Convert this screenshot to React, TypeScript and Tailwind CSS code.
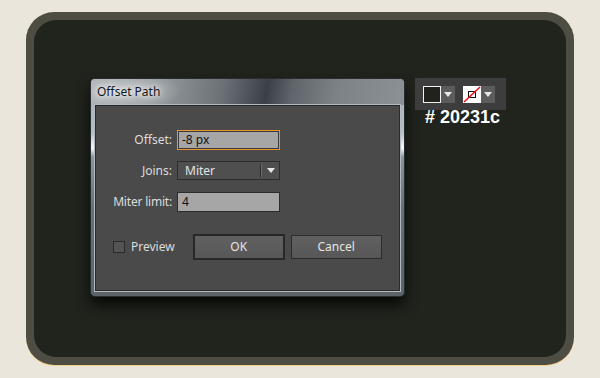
import React from "react";

const font = { fontFamily: '"Noto Sans", "Open Sans", sans-serif' };

function Arrow({ className = "" }: { className?: string }) {
  return (
    <svg width="8" height="5" viewBox="0 0 8 5" className={className}>
      <path d="M0 0 H8 L4 5 Z" fill="#e8e8e8" />
    </svg>
  );
}

export default function App() {
  return (
    <div className="w-[600px] h-[378px] bg-[#ebe6dc] pt-[12px] pl-[26px] overflow-hidden" style={font}>
      <div className="w-[548px] h-[353px] rounded-[28px] bg-[#4e4d44] p-[8px] shadow-[0_1px_0_#f4cf86]">
        <div className="w-full h-full rounded-[22px] bg-[#21241d] pt-[58px] pl-[56px] flex items-start">
          {/* Dialog */}
          <div className="w-[315px] h-[219px] rounded-[5px] border border-[#2a2d30] shadow-[0_8px_14px_rgba(0,0,0,0.75)] flex flex-col overflow-hidden bg-[linear-gradient(180deg,#a4aaad_0%,#b9bec1_25%,#e9ebec_30%,#f4f4f4_32%,#8d9397_36%,#6a7075_60%,#5c6369_100%)]">
            <div className="h-[26px] shrink-0 flex items-center pl-[6px] bg-[radial-gradient(ellipse_60px_20px_at_30px_12px,#c4c8ca,transparent),linear-gradient(100deg,#a9aeb1_0%,#939a9d_22%,#6b7176_42%,#3b4046_56%,#5f656a_64%,#7c8286_78%,#8b9194_100%)]">
              <span className="text-[12px] text-[#15171a] [text-shadow:0_0_5px_#ffffff,0_0_8px_#ffffff]">Offset Path</span>
            </div>
            <div className="mx-[4px] h-[186px] bg-[#4a4a4a] border border-[#2b2b2b] ring-1 ring-[#b3babf] flex flex-col pt-[24px]">
              <div className="flex items-center h-[20px]">
                <span className="w-[76px] text-right text-[12px] text-[#dcdcdc]">Offset:</span>
                <div className="ml-[5px] w-[103px] h-[20px] bg-[#ee9530] p-[1px]">
                  <div className="w-full h-full bg-[#a6a6a6] border border-[#3a3a3a] flex items-center pl-[3px] text-[12px] text-[#111]">-8 px</div>
                </div>
              </div>
              <div className="flex items-center h-[19px] mt-[11px]">
                <span className="w-[76px] text-right text-[12px] text-[#dcdcdc]">Joins:</span>
                <div className="ml-[5px] w-[103px] h-[19px] bg-[#4f4f4f] border border-[#2c2c2c] flex items-center text-[12px] text-[#e2e2e2]">
                  <span className="flex-1 pl-[7px]">Miter</span>
                  <div className="w-[1px] h-[13px] bg-[#2e2e2e]" />
                  <div className="w-[1px] h-[13px] bg-[#6c6c6c]" />
                  <div className="w-[17px] flex items-center justify-center">
                    <Arrow />
                  </div>
                </div>
              </div>
              <div className="flex items-center h-[20px] mt-[12px]">
                <span className="w-[76px] text-right text-[12px] text-[#dcdcdc] tracking-[-0.2px]">Miter limit:</span>
                <div className="ml-[5px] w-[103px] h-[20px] bg-[#a6a6a6] border border-[#2c2c2c] flex items-center pl-[4px] text-[12px] text-[#111]">4</div>
              </div>
              <div className="flex items-center mt-[22px] h-[26px]">
                <div className="ml-[17px] w-[12px] h-[12px] border border-[#2a2a2a] bg-[#545454]" />
                <span className="ml-[6px] text-[12px] text-[#dcdcdc]">Preview</span>
                <div className="ml-[18px] w-[92px] h-[26px] border-2 border-[#282828] bg-[linear-gradient(180deg,#616161,#575757)] flex items-center justify-center text-[12px] text-[#e4e4e4]">OK</div>
                <div className="ml-[6px] w-[91px] h-[24px] border border-[#2c2c2c] bg-[linear-gradient(180deg,#606060,#575757)] flex items-center justify-center text-[12px] text-[#e4e4e4]">Cancel</div>
              </div>
            </div>
          </div>

          {/* Swatches */}
          <div className="ml-[10px] flex flex-col">
            <div className="w-[91px] h-[32px] bg-[#3d3d3d] flex items-center pl-[8px] pt-[1px]">
              <div className="w-[18px] h-[17px] border border-[#f2f2f2] bg-[#20231c]" />
              <div className="w-[14px] h-[17px] bg-[#5c5c5c] flex items-center justify-center">
                <Arrow />
              </div>
              <div className="ml-[8px] w-[18px] h-[17px] bg-white relative">
                <svg width="18" height="17" viewBox="0 0 18 17" className="absolute inset-0">
                  <rect x="5.5" y="5.5" width="7" height="6" fill="none" stroke="#111" strokeWidth="1" />
                  <line x1="1" y1="16" x2="17" y2="1" stroke="#e8141b" strokeWidth="1.6" />
                </svg>
              </div>
              <div className="w-[14px] h-[17px] bg-[#5c5c5c] flex items-center justify-center">
                <Arrow />
              </div>
            </div>
            <div
              className="-mt-[2px] ml-[10px] text-[18px] leading-[18px] font-bold text-white"
              style={{ fontFamily: '"Liberation Sans", Arial, sans-serif' }}
            >
              # 20231c
            </div>
          </div>
        </div>
      </div>
    </div>
  );
}
